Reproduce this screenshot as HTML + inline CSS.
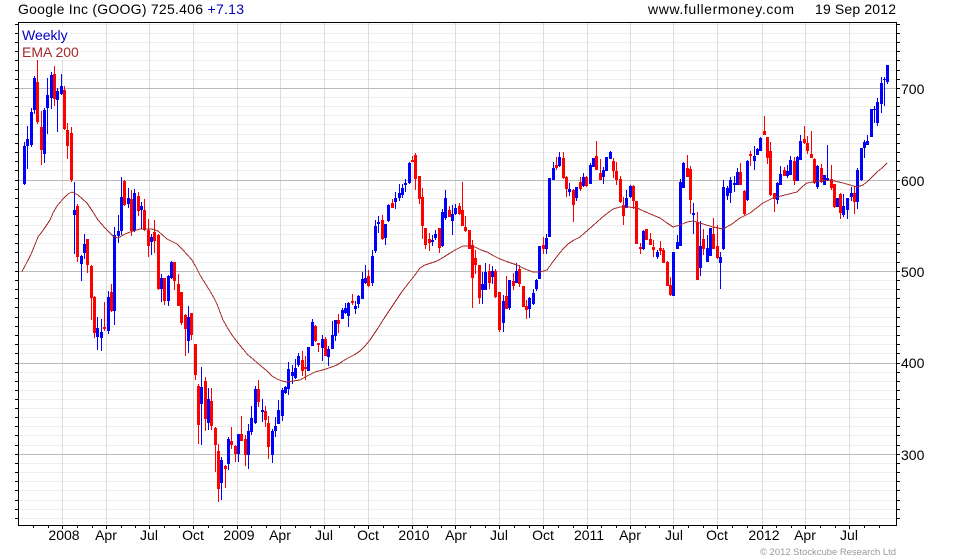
<!DOCTYPE html>
<html>
<head>
<meta charset="utf-8">
<style>
html,body{margin:0;padding:0;background:#fff;width:980px;height:560px;overflow:hidden}
svg{display:block}
text{font-family:"Liberation Sans",Arial,sans-serif;font-size:14px;fill:#000}
</style>
</head>
<body>
<svg width="980" height="560" viewBox="0 0 980 560" xmlns="http://www.w3.org/2000/svg">
<g shape-rendering="crispEdges" fill="none">
<path stroke="#eeeeee" d="M19 24.5H896M19 33.5H896M19 42.5H896M19 51.5H896M19 60.5H896M19 70.5H896M19 79.5H896M19 97.5H896M19 106.5H896M19 115.5H896M19 124.5H896M19 134.5H896M19 143.5H896M19 152.5H896M19 161.5H896M19 170.5H896M19 189.5H896M19 198.5H896M19 207.5H896M19 216.5H896M19 225.5H896M19 234.5H896M19 243.5H896M19 252.5H896M19 262.5H896M19 280.5H896M19 289.5H896M19 298.5H896M19 307.5H896M19 317.5H896M19 326.5H896M19 335.5H896M19 344.5H896M19 353.5H896M19 372.5H896M19 381.5H896M19 390.5H896M19 399.5H896M19 408.5H896M19 417.5H896M19 426.5H896M19 435.5H896M19 445.5H896M19 463.5H896M19 472.5H896M19 481.5H896M19 490.5H896M19 500.5H896M19 509.5H896M19 518.5H896"/>
<path stroke="#dddddd" d="M62.5 23V525M106.5 23V525M149.5 23V525M193.5 23V525M237.5 23V525M280.5 23V525M324.5 23V525M368.5 23V525M412.5 23V525M455.5 23V525M499.5 23V525M543.5 23V525M587.5 23V525M630.5 23V525M673.5 23V525M717.5 23V525M762.5 23V525M805.5 23V525M849.5 23V525"/>
<path stroke="#bbbbbb" d="M19 88.5H896M19 180.5H896M19 271.5H896M19 363.5H896M19 454.5H896"/>
</g>
<rect x="20" y="27" width="50" height="15" fill="#fff"/>
<rect x="20" y="44" width="60" height="16" fill="#fff"/>
<g shape-rendering="crispEdges" fill="none">
<path stroke="#0000ff" stroke-width="1" d="M24.5 142V185M27.5 126V169M31.5 108V147M34.5 76V114M44.5 108V163M47.5 78V134M51.5 72V109M57.5 88V132M61.5 74V95M74.5 182V254M81.5 255V281M84.5 234V259M97.5 317V350M101.5 319V351M108.5 291V334M114.5 227V325M118.5 215V243M121.5 177V235M128.5 188V208M134.5 189V232M141.5 202V229M151.5 234V255M161.5 274V302M168.5 275V306M171.5 261V279M188.5 306V353M201.5 367V445M208.5 388V430M221.5 457V500M228.5 437V470M238.5 434V462M248.5 424V469M251.5 406V435M255.5 386V424M262.5 399V422M272.5 429V463M275.5 417V437M278.5 400V424M282.5 388V421M285.5 386V394M288.5 362V395M292.5 365V384M295.5 359V379M298.5 353V367M308.5 347V371M312.5 319V346M322.5 335V361M328.5 346V366M332.5 321V349M335.5 320V341M342.5 308V319M345.5 303V314M348.5 302V327M355.5 301V314M358.5 295V308M362.5 272V299M365.5 265V284M372.5 250V286M375.5 220V253M378.5 216V233M385.5 224V245M388.5 204V222M395.5 192V209M399.5 184V201M402.5 184V198M405.5 179V192M409.5 162V184M432.5 235V246M435.5 230V240M442.5 209V247M445.5 190V220M452.5 205V235M455.5 204V215M482.5 272V304M485.5 263V290M492.5 266V284M503.5 295V332M509.5 280V310M516.5 263V283M529.5 297V318M533.5 289V305M536.5 279V291M539.5 246V279M546.5 234V254M549.5 178V237M553.5 162V180M559.5 152V167M569.5 183V196M576.5 187V201M583.5 173V187M590.5 163V184M593.5 158V167M603.5 167V184M606.5 157V171M610.5 151V159M626.5 190V208M630.5 185V198M643.5 230V250M657.5 250V259M673.5 252V296M677.5 235V249M680.5 179V246M683.5 162V188M693.5 203V234M700.5 221V276M707.5 235V262M710.5 228V256M720.5 252V289M723.5 180V250M727.5 186V200M730.5 177V203M734.5 176V192M737.5 168V185M747.5 160V201M754.5 146V170M757.5 148V155M760.5 137V151M777.5 182V204M780.5 166V185M787.5 165V178M790.5 156V175M797.5 156V181M800.5 135V160M817.5 165V189M824.5 175V185M827.5 145V181M837.5 198V207M843.5 194V217M847.5 198V219M851.5 187V201M857.5 168V209M861.5 148V181M864.5 140V158M867.5 135V145M871.5 109V137M874.5 106V123M877.5 98V126M881.5 77V113M884.5 77V106M887.5 65V84"/>
<path stroke="#0000ff" stroke-width="3" d="M24.5 146V184M27.5 139V146M31.5 112V145M34.5 78V110M44.5 110V154M47.5 95V108M51.5 75V98M57.5 91V100M61.5 86V94M74.5 210V215M81.5 256V264M84.5 244V253M97.5 328V337M101.5 332V338M108.5 297V331M114.5 235V311M118.5 231V236M121.5 197V231M128.5 198V204M134.5 193V231M141.5 206V210M151.5 237V242M161.5 278V289M168.5 276V301M171.5 262V278M188.5 317V341M201.5 387V404M208.5 399V423M221.5 460V483M228.5 439V464M238.5 434V454M248.5 431V455M251.5 418V432M255.5 389V423M262.5 410V412M272.5 431V455M275.5 426V431M278.5 410V424M282.5 390V416M285.5 387V393M288.5 369V389M292.5 372V376M295.5 368V378M298.5 356V365M308.5 347V371M312.5 322V346M322.5 339V348M328.5 349V357M332.5 335V349M335.5 320V336M342.5 310V319M345.5 308V313M348.5 303V316M355.5 306V309M358.5 296V304M362.5 279V299M365.5 278V283M372.5 256V283M375.5 226V251M378.5 222V224M385.5 224V238M388.5 205V221M395.5 198V202M399.5 193V198M402.5 188V195M405.5 183V185M409.5 163V183M432.5 240V242M435.5 234V238M442.5 212V246M445.5 198V218M452.5 214V221M455.5 208V214M482.5 284V290M485.5 272V290M492.5 271V277M503.5 301V323M509.5 280V308M516.5 271V283M529.5 298V309M533.5 293V304M536.5 280V289M539.5 246V279M546.5 238V249M549.5 178V237M553.5 168V180M559.5 157V166M569.5 189V192M576.5 187V198M583.5 177V186M590.5 165V184M593.5 158V167M603.5 170V177M606.5 157V171M610.5 152V159M626.5 198V208M630.5 186V197M643.5 231V249M657.5 252V257M673.5 252V296M677.5 242V249M680.5 182V246M683.5 163V188M693.5 213V215M700.5 246V268M707.5 248V262M710.5 228V256M720.5 257V263M723.5 187V249M727.5 188V196M730.5 180V193M734.5 183V185M737.5 172V185M747.5 161V200M754.5 156V161M757.5 149V155M760.5 138V151M777.5 183V200M780.5 174V185M787.5 171V176M790.5 160V175M797.5 157V181M800.5 141V160M817.5 166V187M824.5 175V185M827.5 178V181M837.5 198V207M843.5 206V215M847.5 198V210M851.5 193V197M857.5 170V202M861.5 148V180M864.5 142V148M867.5 141V145M871.5 109V137M874.5 109V110M877.5 102V123M881.5 83V104M884.5 79V80M887.5 65V82"/>
<path stroke="#ff0000" stroke-width="1" d="M37.5 60V124M41.5 111V165M54.5 66V106M64.5 86V130M67.5 123V159M71.5 127V182M77.5 204V262M87.5 239V273M91.5 265V320M94.5 296V338M104.5 302V331M111.5 284V312M124.5 180V206M131.5 190V236M138.5 192V216M144.5 199V231M148.5 219V257M154.5 220V253M158.5 234V290M164.5 278V305M174.5 262V290M178.5 274V306M181.5 292V325M185.5 314V356M191.5 313V340M195.5 344V380M198.5 384V444M205.5 377V431M211.5 388V430M215.5 427V472M218.5 444V502M225.5 465V488M231.5 427V449M235.5 445V462M241.5 416V441M245.5 435V466M258.5 380V407M265.5 406V427M268.5 416V459M302.5 351V376M305.5 356V380M315.5 325V342M318.5 343V352M325.5 337V356M338.5 314V333M352.5 294V305M368.5 270V287M382.5 215V240M392.5 199V208M412.5 156V162M415.5 153V190M419.5 176V204M422.5 188V239M425.5 228V249M429.5 233V251M439.5 228V253M449.5 206V217M459.5 203V215M462.5 182V226M465.5 216V232M469.5 230V249M472.5 240V308M475.5 250V274M479.5 265V304M489.5 264V289M495.5 269V298M499.5 292V332M506.5 276V309M513.5 273V290M519.5 265V287M523.5 286V307M526.5 300V319M543.5 237V254M556.5 157V170M563.5 152V179M566.5 176V197M573.5 189V222M580.5 177V191M586.5 176V187M596.5 141V170M600.5 159V180M613.5 158V178M616.5 162V185M620.5 176V203M623.5 197V225M633.5 185V209M636.5 201V244M640.5 243V254M646.5 229V240M650.5 233V245M653.5 240V257M660.5 241V255M663.5 248V263M667.5 261V286M670.5 277V296M687.5 155V177M690.5 166V214M697.5 212V280M703.5 229V255M713.5 218V249M717.5 225V259M740.5 163V185M744.5 190V215M750.5 151V166M764.5 116V135M767.5 137V164M770.5 142V196M774.5 193V212M784.5 167V176M794.5 157V185M804.5 126V144M807.5 136V154M811.5 131V158M814.5 158V184M821.5 164V183M831.5 165V190M834.5 184V208M840.5 193V219M854.5 186V214"/>
<path stroke="#ff0000" stroke-width="3" d="M37.5 82V122M41.5 127V150M54.5 74V99M64.5 90V129M67.5 130V146M71.5 133V180M77.5 206V257M87.5 239V265M91.5 266V298M94.5 297V333M104.5 327V329M111.5 292V311M124.5 181V205M131.5 199V231M138.5 196V211M144.5 210V230M148.5 230V246M154.5 232V241M158.5 235V289M164.5 278V301M174.5 262V281M178.5 284V306M181.5 292V323M185.5 315V329M191.5 313V335M195.5 344V375M198.5 386V425M205.5 381V419M211.5 401V426M215.5 428V445M218.5 451V489M225.5 466V469M231.5 441V445M235.5 446V454M241.5 434V441M245.5 439V455M258.5 389V402M265.5 411V420M268.5 423V447M302.5 360V371M305.5 367V369M315.5 326V341M318.5 343V345M325.5 339V356M338.5 320V324M352.5 301V303M368.5 276V286M382.5 220V239M392.5 203V208M412.5 160V162M415.5 155V179M419.5 176V199M422.5 197V226M425.5 228V245M429.5 239V243M439.5 228V248M449.5 210V217M459.5 206V214M462.5 210V226M465.5 227V231M469.5 230V249M472.5 245V278M475.5 258V265M479.5 265V298M489.5 271V283M495.5 271V297M499.5 292V330M506.5 296V309M513.5 281V286M519.5 269V284M523.5 286V307M526.5 306V310M543.5 245V249M556.5 165V168M563.5 158V178M566.5 177V189M573.5 190V205M580.5 182V189M586.5 177V186M596.5 156V170M600.5 173V180M613.5 161V171M616.5 171V180M620.5 179V202M623.5 205V216M633.5 186V201M636.5 201V244M640.5 247V249M646.5 229V240M650.5 239V245M653.5 247V250M660.5 248V251M663.5 250V263M667.5 262V286M670.5 285V295M687.5 168V177M690.5 169V200M697.5 222V280M703.5 239V249M713.5 234V249M717.5 246V258M740.5 172V185M744.5 191V214M750.5 154V156M764.5 131V135M767.5 137V158M770.5 151V195M774.5 193V199M784.5 170V176M794.5 161V181M804.5 139V143M807.5 143V151M811.5 154V158M814.5 159V183M821.5 168V182M831.5 179V188M834.5 184V207M840.5 194V213M854.5 193V202"/>
</g>
<polyline fill="none" stroke="#a52a2a" stroke-width="1" shape-rendering="crispEdges" points="21.7,272 26,264 30.7,255 34,247 38,237 44,229 50,220 53,213 57,206 63,199 68,194 72,192 78,195 87,203 93,212 98,220 105,228 113,236 118,238 125,234 133,231 140,229 152,229 158,231 167,239 177,244 183,250 192,260 196,267 200,275 205,283 210,291 214,298 217,304 220,312 223,320 227,327 232,335 238,343 243,349 247,354 254,360 261,366 267,371 272,376 277,379 282,381 287,382 293,381 300,380 307,376 315,372 326,369 337,365 343,361 348,358 354,355 360,351 365,346 370,340 378,328 385,317 395,302 401,293 407,285 415,275 420,268 425,265 437,261 444,257 450,253 457,249 463,246 469,246 475,247 481,250 487,252 494,256 500,259 508,262 517,265 525,269 533,272 540,272 547,270 552,263 558,255 563,249 568,244 574,240 580,237 588,230 597,222 605,215 613,209 620,207 628,207 637,208 648,213 660,218 667,223 673,227 680,225 687,222 693,221 703,224 713,227 723,229 732,224 740,218 750,213 763,203 773,198 785,195 797,192 802,187 807,183 818,181 830,180 843,183 857,187 863,185 868,181 873,176 877,172 882,168 887,163"/>
<g shape-rendering="crispEdges" fill="none" stroke="#000">
<path d="M18.5 22.5H896.5V525.5H18.5Z"/>
<path d="M15 24.5H18M15 33.5H18M15 42.5H18M15 51.5H18M15 60.5H18M15 70.5H18M15 79.5H18M15 88.5H18M15 97.5H18M15 106.5H18M15 115.5H18M15 124.5H18M15 134.5H18M15 143.5H18M15 152.5H18M15 161.5H18M15 170.5H18M15 180.5H18M15 189.5H18M15 198.5H18M15 207.5H18M15 216.5H18M15 225.5H18M15 234.5H18M15 243.5H18M15 252.5H18M15 262.5H18M15 271.5H18M15 280.5H18M15 289.5H18M15 298.5H18M15 307.5H18M15 317.5H18M15 326.5H18M15 335.5H18M15 344.5H18M15 353.5H18M15 363.5H18M15 372.5H18M15 381.5H18M15 390.5H18M15 399.5H18M15 408.5H18M15 417.5H18M15 426.5H18M15 435.5H18M15 445.5H18M15 454.5H18M15 463.5H18M15 472.5H18M15 481.5H18M15 490.5H18M15 500.5H18M15 509.5H18M15 518.5H18"/>
<path d="M897 24.5H900M897 33.5H900M897 42.5H900M897 51.5H900M897 60.5H900M897 70.5H900M897 79.5H900M897 88.5H900M897 97.5H900M897 106.5H900M897 115.5H900M897 124.5H900M897 134.5H900M897 143.5H900M897 152.5H900M897 161.5H900M897 170.5H900M897 180.5H900M897 189.5H900M897 198.5H900M897 207.5H900M897 216.5H900M897 225.5H900M897 234.5H900M897 243.5H900M897 252.5H900M897 262.5H900M897 271.5H900M897 280.5H900M897 289.5H900M897 298.5H900M897 307.5H900M897 317.5H900M897 326.5H900M897 335.5H900M897 344.5H900M897 353.5H900M897 363.5H900M897 372.5H900M897 381.5H900M897 390.5H900M897 399.5H900M897 408.5H900M897 417.5H900M897 426.5H900M897 435.5H900M897 445.5H900M897 454.5H900M897 463.5H900M897 472.5H900M897 481.5H900M897 490.5H900M897 500.5H900M897 509.5H900M897 518.5H900"/>
<path d="M33.5 526V528M48.5 526V528M62.5 526V529M77.5 526V528M92.5 526V528M106.5 526V529M121.5 526V528M135.5 526V528M149.5 526V529M164.5 526V528M179.5 526V528M193.5 526V529M208.5 526V528M222.5 526V528M237.5 526V529M251.5 526V528M266.5 526V528M280.5 526V529M295.5 526V528M310.5 526V528M324.5 526V529M339.5 526V528M354.5 526V528M368.5 526V529M383.5 526V528M398.5 526V528M412.5 526V529M427.5 526V528M441.5 526V528M455.5 526V529M470.5 526V528M485.5 526V528M499.5 526V529M514.5 526V528M529.5 526V528M543.5 526V529M558.5 526V528M573.5 526V528M587.5 526V529M601.5 526V528M616.5 526V528M630.5 526V529M645.5 526V528M659.5 526V528M673.5 526V529M688.5 526V528M703.5 526V528M717.5 526V529M732.5 526V528M747.5 526V528M762.5 526V529M776.5 526V528M791.5 526V528M805.5 526V529M820.5 526V528M835.5 526V528M849.5 526V529M864.5 526V528M879.5 526V528"/>
</g>
<text x="18" y="14" textLength="185" lengthAdjust="spacing">Google Inc (GOOG) 725.406</text>
<text x="207.5" y="14" textLength="36.5" lengthAdjust="spacing" style="fill:#0000c0">+7.13</text>
<text x="648" y="14" textLength="146" lengthAdjust="spacing">www.fullermoney.com</text>
<text x="815" y="14" textLength="81" lengthAdjust="spacing">19 Sep 2012</text>
<text x="22" y="40" style="fill:#0000c0">Weekly</text>
<text x="22" y="57" style="fill:#a52a2a">EMA 200</text>
<text x="901" y="94">700</text>
<text x="901" y="186">600</text>
<text x="901" y="277">500</text>
<text x="901" y="368">400</text>
<text x="901" y="460">300</text>
<text x="64" y="540" text-anchor="middle">2008</text>
<text x="106" y="540" text-anchor="middle">Apr</text>
<text x="149" y="540" text-anchor="middle">Jul</text>
<text x="193" y="540" text-anchor="middle">Oct</text>
<text x="239" y="540" text-anchor="middle">2009</text>
<text x="280" y="540" text-anchor="middle">Apr</text>
<text x="324" y="540" text-anchor="middle">Jul</text>
<text x="368" y="540" text-anchor="middle">Oct</text>
<text x="414" y="540" text-anchor="middle">2010</text>
<text x="456" y="540" text-anchor="middle">Apr</text>
<text x="499" y="540" text-anchor="middle">Jul</text>
<text x="543" y="540" text-anchor="middle">Oct</text>
<text x="589" y="540" text-anchor="middle">2011</text>
<text x="630" y="540" text-anchor="middle">Apr</text>
<text x="674" y="540" text-anchor="middle">Jul</text>
<text x="717" y="540" text-anchor="middle">Oct</text>
<text x="764" y="540" text-anchor="middle">2012</text>
<text x="805" y="540" text-anchor="middle">Apr</text>
<text x="849" y="540" text-anchor="middle">Jul</text>
<text x="760" y="555" textLength="136" lengthAdjust="spacing" style="font-size:9.5px;fill:#999999">© 2012 Stockcube Research Ltd</text>
</svg>
</body>
</html>
